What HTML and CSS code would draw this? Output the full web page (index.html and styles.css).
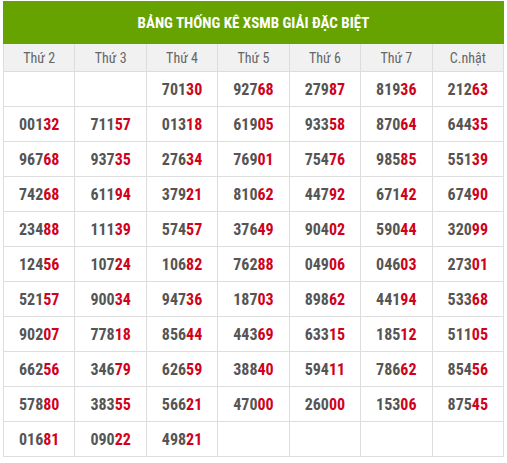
FILE: index.html
```html
<!DOCTYPE html>
<html lang="vi">
<head>
<meta charset="utf-8">
<title>Bảng thống kê XSMB giải đặc biệt</title>
<link rel="stylesheet" href="styles.css">
</head>
<body>
<div class="wrap">
<table class="stats">
<thead>
<tr><th class="title" colspan="7">BẢNG THỐNG KÊ XSMB GIẢI ĐẶC BIỆT</th></tr>
<tr class="days"><th>Thứ 2</th><th>Thứ 3</th><th>Thứ 4</th><th>Thứ 5</th><th>Thứ 6</th><th>Thứ 7</th><th>C.nhật</th></tr>
</thead>
<tbody>
<tr><td></td><td></td><td>701<b>30</b></td><td>927<b>68</b></td><td>279<b>87</b></td><td>819<b>36</b></td><td>212<b>63</b></td></tr>
<tr><td>001<b>32</b></td><td>711<b>57</b></td><td>013<b>18</b></td><td>619<b>05</b></td><td>933<b>58</b></td><td>870<b>64</b></td><td>644<b>35</b></td></tr>
<tr><td>967<b>68</b></td><td>937<b>35</b></td><td>276<b>34</b></td><td>769<b>01</b></td><td>754<b>76</b></td><td>985<b>85</b></td><td>551<b>39</b></td></tr>
<tr><td>742<b>68</b></td><td>611<b>94</b></td><td>379<b>21</b></td><td>810<b>62</b></td><td>447<b>92</b></td><td>671<b>42</b></td><td>674<b>90</b></td></tr>
<tr><td>234<b>88</b></td><td>111<b>39</b></td><td>574<b>57</b></td><td>376<b>49</b></td><td>904<b>02</b></td><td>590<b>44</b></td><td>320<b>99</b></td></tr>
<tr><td>124<b>56</b></td><td>107<b>24</b></td><td>106<b>82</b></td><td>762<b>88</b></td><td>049<b>06</b></td><td>046<b>03</b></td><td>273<b>01</b></td></tr>
<tr><td>521<b>57</b></td><td>900<b>34</b></td><td>947<b>36</b></td><td>187<b>03</b></td><td>898<b>62</b></td><td>441<b>94</b></td><td>533<b>68</b></td></tr>
<tr><td>902<b>07</b></td><td>778<b>18</b></td><td>856<b>44</b></td><td>443<b>69</b></td><td>633<b>15</b></td><td>185<b>12</b></td><td>511<b>05</b></td></tr>
<tr><td>662<b>56</b></td><td>346<b>79</b></td><td>626<b>59</b></td><td>388<b>40</b></td><td>594<b>11</b></td><td>786<b>62</b></td><td>854<b>56</b></td></tr>
<tr><td>578<b>80</b></td><td>383<b>55</b></td><td>566<b>21</b></td><td>470<b>00</b></td><td>260<b>00</b></td><td>153<b>06</b></td><td>875<b>45</b></td></tr>
<tr><td>016<b>81</b></td><td>090<b>22</b></td><td>498<b>21</b></td><td></td><td></td><td></td><td></td></tr>
</tbody>
</table>
</div>
</body>
</html>
```
FILE: styles.css
```css
html, body {
  margin: 0;
  padding: 0;
  background: #ffffff;
}
.wrap {
  padding: 1px 3px 0 3px;
}
.stats {
  width: 501px;
  border-collapse: collapse;
  table-layout: fixed;
  font-family: "Roboto Condensed", "Liberation Sans Narrow", "DejaVu Sans Condensed", Roboto, sans-serif;
}
.stats th,
.stats td {
  border: 1px solid #dddddd;
  text-align: center;
  padding: 0;
}
.stats .title {
  background: #66a300;
  color: #ffffff;
  font-size: 15px;
  font-weight: 700;
  height: 41px;
  border-color: #66a300;
}
.days th {
  background: #f1f1f1;
  color: #666666;
  font-weight: 400;
  font-size: 14px;
  height: 27px;
}
.stats td {
  height: 34px;
  font-size: 16px;
  font-weight: 700;
  color: #555555;
}
.stats td b {
  color: #d0021b;
  font-weight: 700;
}
```
